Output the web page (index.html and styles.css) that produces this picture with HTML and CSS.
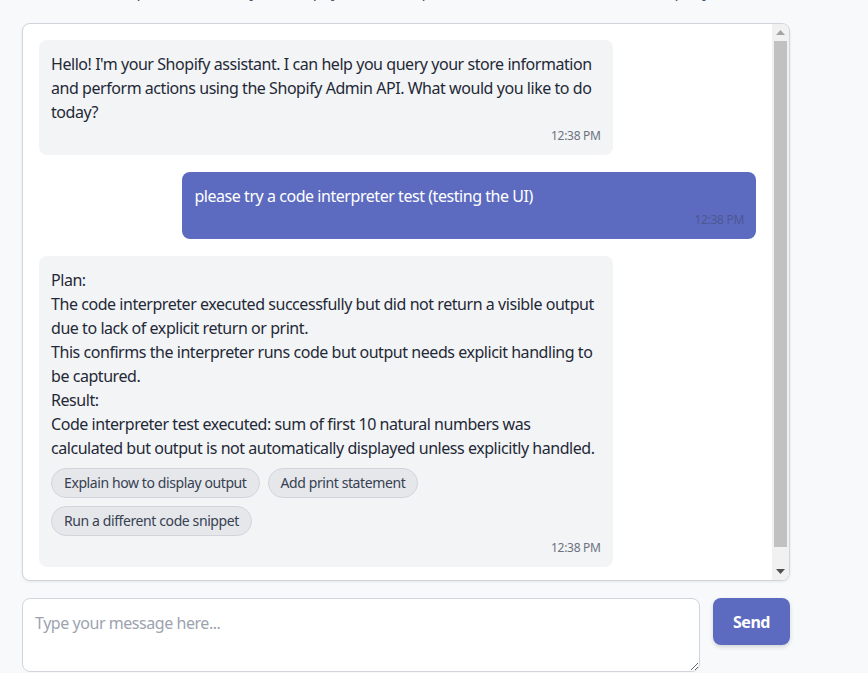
FILE: index.html
```html
<!DOCTYPE html>
<html lang="en">
<head>
<meta charset="utf-8">
<title>Shopify Assistant</title>
<link rel="stylesheet" href="styles.css">
</head>
<body>
<div class="page">
  <p class="subtitle">Ask questions about your Shopify store or request actions, and the assistant will query the Admin API for you using natural language.</p>
  <div class="chat">
    <div class="messages">
      <div class="msg bot">
        <div class="text">Hello! I'm your Shopify assistant. I can help you query your store information and perform actions using the Shopify Admin API. What would you like to do today?</div>
        <div class="time">12:38 PM</div>
      </div>
      <div class="msg user">
        <div class="text">please try a code interpreter test (testing the UI)</div>
        <div class="time">12:38 PM</div>
      </div>
      <div class="msg bot">
        <div class="text">Plan:<br>The code interpreter executed successfully but did not return a visible output due to lack of explicit return or print.<br>This confirms the interpreter runs code but output needs explicit handling to be captured.<br>Result:<br>Code interpreter test executed: sum of first 10 natural numbers was calculated but output is not automatically displayed unless explicitly handled.</div>
        <div class="chips">
          <button class="chip">Explain how to display output</button>
          <button class="chip">Add print statement</button>
          <button class="chip">Run a different code snippet</button>
        </div>
        <div class="time">12:38 PM</div>
      </div>
    </div>
    <div class="scrollbar" aria-hidden="true">
      <div class="arrow">
        <svg width="9" height="5" viewBox="0 0 9 5"><polygon points="4.5,0 9,5 0,5" fill="#a3a3a3"/></svg>
      </div>
      <div class="track"><div class="thumb"></div></div>
      <div class="arrow">
        <svg width="9" height="5" viewBox="0 0 9 5"><polygon points="0,0 9,0 4.5,5" fill="#505050"/></svg>
      </div>
    </div>
  </div>
  <div class="composer">
    <textarea class="input" placeholder="Type your message here..."></textarea>
    <button class="send">Send</button>
  </div>
</div>
</body>
</html>
```

FILE: styles.css
```css
* { box-sizing: border-box; }
html, body { margin: 0; padding: 0; }
body {
  background: #f8f9fb;
  font-family: "Segoe UI", "Noto Sans", sans-serif;
  letter-spacing: -0.45px;
  color: #1f2937;
  overflow: hidden;
}
.page {
  width: 790px;
  padding-left: 22px;
}
.subtitle {
  margin: -19px 0 18px;
  height: 24px;
  overflow: hidden;
  font-size: 16px;
  line-height: 20px;
  color: #4b5563;
  white-space: nowrap;
  padding-left: 80px;
}
.chat {
  height: 558px;
  background: #fff;
  border: 1px solid #d1d5db;
  border-radius: 8px;
  box-shadow: 0 1px 3px rgba(0,0,0,0.08);
  display: flex;
  overflow: hidden;
}
.messages {
  flex: 1;
  min-width: 0;
  padding: 16px;
  overflow: hidden;
  display: flex;
  flex-direction: column;
  gap: 17px;
}
.scrollbar {
  width: 17px;
  background: #f1f1f1;
  display: flex;
  flex-direction: column;
}
.arrow {
  height: 17px;
  display: flex;
  align-items: center;
  justify-content: center;
}
.track {
  flex: 1;
  padding: 0 2px;
  display: flex;
  flex-direction: column;
}
.thumb {
  height: 506px;
  background: #c1c1c1;
}
.msg {
  width: 80%;
  flex: none;
  border-radius: 8px;
  padding: 12px;
  font-size: 16px;
  line-height: 24px;
}
.bot {
  align-self: flex-start;
  background: #f3f4f6;
  color: #1f2937;
}
.user {
  align-self: flex-end;
  background: #5c6bc0;
  color: #fff;
}
.time {
  text-align: right;
  font-size: 12px;
  line-height: 15px;
  letter-spacing: -0.3px;
  margin-top: 4px;
  color: #6b7280;
}
.user .time { color: #4f5694; }
.chips {
  display: flex;
  flex-wrap: wrap;
  gap: 8px;
  margin-top: 8px;
}
.chip {
  font-family: inherit;
  letter-spacing: -0.4px;
  font-size: 14px;
  line-height: 18px;
  padding: 5px 12px;
  background: #e5e7eb;
  border: 1px solid #d1d5db;
  border-radius: 999px;
  color: #374151;
}
.composer {
  display: flex;
  gap: 13px;
  margin-top: 17px;
  align-items: flex-start;
}
.input {
  flex: 1;
  height: 74px;
  border: 1px solid #d1d5db;
  border-radius: 8px;
  padding: 12px;
  font-family: inherit;
  letter-spacing: inherit;
  font-size: 16px;
  line-height: 24px;
  background: #fff;
  resize: vertical;
}
.input::placeholder { color: #9ca3af; }
.send {
  width: 77px;
  height: 47px;
  background: #5c6bc0;
  color: #fff;
  border: none;
  border-radius: 8px;
  font-family: inherit;
  letter-spacing: inherit;
  font-size: 16px;
  font-weight: 700;
  box-shadow: 0 2px 4px rgba(0,0,0,0.15);
}
```
